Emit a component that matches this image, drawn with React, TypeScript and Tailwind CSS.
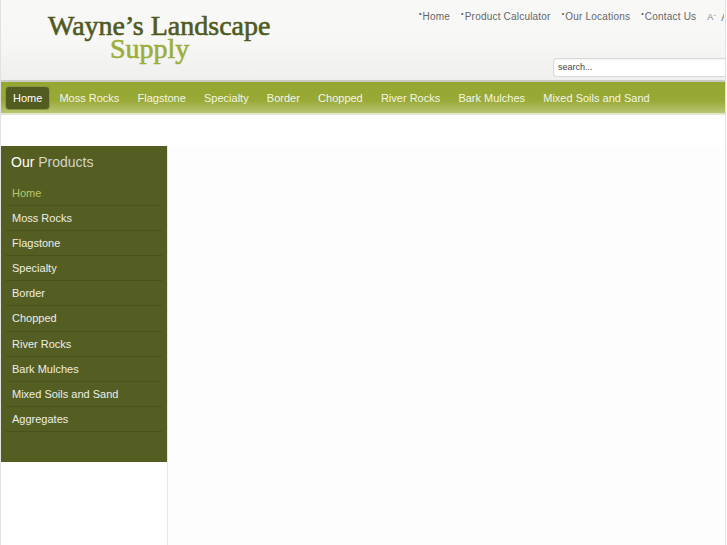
import React from "react";

const topLinks = ["Home", "Product Calculator", "Our Locations", "Contact Us"];

const navItems = [
  "Home",
  "Moss Rocks",
  "Flagstone",
  "Specialty",
  "Border",
  "Chopped",
  "River Rocks",
  "Bark Mulches",
  "Mixed Soils and Sand",
];

const sideItems = [...navItems, "Aggregates"];

export default function App() {
  return (
    <div className="w-[727px] h-[545px] overflow-hidden bg-white font-['Liberation_Sans',Arial,sans-serif]">
      <div className="w-[726px] border-l border-r border-[#e2e2e0] bg-white">
        {/* Header */}
        <header className="h-[80px] bg-gradient-to-b from-[#f8f8f7] via-[#f7f7f5] to-[#efefed] flex justify-between">
          <div className="pl-[47px] pt-[14px] font-['Liberation_Serif','Times_New_Roman',serif] text-[28px] leading-[23px] [-webkit-text-stroke:0.6px_currentColor]">
            <div className="text-[#4f5a1f]">Wayne’s Landscape</div>
            <div className="pl-[62px] text-[#9cae39]">Supply</div>
          </div>
          <div className="flex flex-col items-end pt-[10px]">
            <div className="flex items-center text-[10px] text-[#666] leading-[14px] pr-[1px] tracking-[0.2px]">
              {topLinks.map((l) => (
                <span key={l} className="mr-[11px] flex items-start">
                  <span className="text-[7px] leading-[8px] mr-[1px] text-[#555]">•</span>
                  {l}
                </span>
              ))}
              <span className="text-[9px] text-[#888] mr-[5px]">A<sup className="text-[7px]">-</sup></span>
              <span className="text-[12px] text-[#888] w-[3px] overflow-hidden">A</span>
            </div>
            <div className="mt-[34px] w-[172px] h-[19px] rounded-l-[4px] border border-[#d8d8d6] border-r-0 bg-white text-[9px] text-[#444] pl-[4px] leading-[17px] shadow-[inset_0_1px_2px_rgba(0,0,0,0.05)]">
              search...
            </div>
          </div>
        </header>

        {/* Nav */}
        <div className="border-t-[2px] border-[#cbcbc6]">
          <nav className="h-[33px] bg-gradient-to-b from-[#96a632] via-[#99a936] via-60% to-[#b9c670] border-b-[2px] border-[#e2e6cf] flex items-center pl-[4px]">
            {navItems.map((n, i) => (
              <span
                key={n}
                className={
                  i === 0
                    ? "h-[24px] px-[7px] rounded-[4px] bg-[#535c20] border border-[#8a9640] text-white text-[11px] leading-[22px]"
                    : "px-[9.1px] text-[#f4f6e8] text-[11px] leading-[22px]"
                }
              >
                {n}
              </span>
            ))}
          </nav>
        </div>

        {/* Body */}
        <div className="flex pt-[31px] bg-white">
          <div className="w-[167px] border-r border-[#e6e6e4] h-[500px]">
            <div className="bg-[#545e23] h-[316px] pt-[7px]">
              <div className="px-[10px] text-[14px] leading-[18px] mb-[10px]">
                <span className="text-white">Our</span>{" "}
                <span className="text-[#d3d4c8]">Products</span>
              </div>
              <ul className="px-[5px]">
                {sideItems.map((s, i) => (
                  <li
                    key={s}
                    className={
                      "h-[25.1px] border-b border-[#4a521c] pl-[6px] text-[11px] leading-[24px] " +
                      (i === 0 ? "text-[#b8c86c]" : "text-[#eeeee6]")
                    }
                  >
                    {s}
                  </li>
                ))}
              </ul>
            </div>
          </div>
          <div className="flex-1 bg-[#fdfdfd]" />
        </div>
      </div>
    </div>
  );
}
